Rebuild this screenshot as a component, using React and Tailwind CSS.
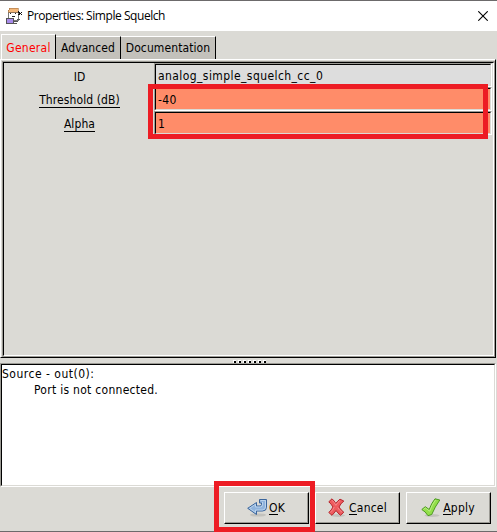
import React from "react";

const sans = "font-['DejaVu_Sans_Condensed','DejaVu_Sans',sans-serif] [font-stretch:condensed]";

function Entry({ value, fill }) {
  return (
    <div className="h-6 w-[338px] border-t border-l border-t-[#9b9a94] border-l-[#9b9a94] border-r border-b border-r-white border-b-white">
      <div className={`flex h-[22px] items-center border-t border-l border-black border-r border-b border-r-[#dbdad5] border-b-[#dbdad5] pt-[2px] pl-[2px] text-[12px] tracking-[0.42px] ${fill}`}>
        <span className="whitespace-pre">{value}</span>
      </div>
    </div>
  );
}

function Row({ label, underline, children }) {
  return (
    <div className="flex h-6">
      <div className="flex w-[151px] items-center justify-center pt-[3px] text-[12px] tracking-[0.1px]">
        <span className={underline ? "flex h-[14px] items-center border-b border-black" : "flex h-[14px] items-center"}>{label}</span>
      </div>
      <div className="-ml-px">{children}</div>
    </div>
  );
}

function Button({ icon, mnemonic, rest }) {
  return (
    <div className="h-8 w-[85px] border-t border-l border-white border-r border-b border-r-black border-b-black">
      <div className="flex h-[30px] items-center justify-center gap-[2px] border-r border-b border-[#9b9a94] text-[12px] tracking-[0.2px]">
        {icon}
        <span className="pt-[2px] leading-[15px]">
          <span className="inline-block border-b border-black leading-[12px]">{mnemonic}</span>
          {rest}
        </span>
      </div>
    </div>
  );
}

const OkIcon = (
  <svg className="h-5 w-5" viewBox="0 0 20 20">
    <ellipse cx="11" cy="17" rx="8" ry="1.6" fill="#c3c2bd" />
    <path d="M12.500 1.500h7v7.700q0 3.800-4 3.800H9.500v3.500L.7 10.300 9.500 4.500v3.500h3.500q1.500 0 1.500-1.500V5h-2z" fill="#8fb3dc" stroke="#3a659c" strokeLinejoin="round" />
    <path d="M13.500 2.500h5v6.500q0 3-3.300 3H8.500v2.500L2.500 10.300 8.500 6.300V9h5q2 0 2-2.500V4" fill="none" stroke="#c5daf0" strokeWidth=".8" />
  </svg>
);

const CancelIcon = (
  <svg className="h-5 w-5" viewBox="0 0 20 20">
    <ellipse cx="11" cy="17.500" rx="7" ry="1.400" fill="#c3c2bd" />
    <path d="M5 .8Q7.500 3 8.800 5.500 10.500 3 13 1.200L16.800 3Q13.500 5.800 12 9q2 3.200 4.800 5.200L13.500 17.300Q10.700 15 9 12.500 7.300 15 5 17.300L1.800 14.500Q4.500 12 6 9 4.200 6 1.800 3.800z" fill="#ee5b5e" stroke="#b5242b" strokeLinejoin="round" />
    <path d="M5 2.200Q7.500 4.500 8.800 7.300 10.500 4.500 13 2.500M3.300 14.500Q6 12 7.200 9M10.700 9.500q1.800 3 4.500 4.800" fill="none" stroke="#f79799" strokeWidth=".8" />
  </svg>
);

const ApplyIcon = (
  <svg className="h-5 w-5" viewBox="0 0 20 20">
    <ellipse cx="11" cy="17.500" rx="7.500" ry="1.400" fill="#c3c2bd" />
    <path d="M.8 11.500 4.300 8.700 8.200 11.500Q10.500 5 14 .8L18.800 2Q13.800 9 10.700 16.500L7 17.700Q4.500 13.500.8 11.500z" fill="#92df49" stroke="#4d9a22" strokeLinejoin="round" />
    <path d="M2.500 11.400 4.400 10 8.700 13.200Q11 6.500 14.500 2" fill="none" stroke="#c5f195" strokeWidth=".8" />
  </svg>
);

function AppIcon() {
  return (
    <svg className="h-4 w-4" viewBox="0 0 16 16" shapeRendering="crispEdges">
      <path d="M2 4h10v8H2z" fill="#fff" stroke="#777" />
      <path d="M3 0h9v4H2V2h1z" fill="#f4b778" stroke="#a67545" strokeWidth=".6" />
      <path d="M4 5h1v1H4zM9 5h1v1H9zM6 8h3v1H6z" fill="#222" />
      <path d="M0 10h8v6H0z" fill="#555" />
      <path d="M1 11h6v4H1z" fill="#a78bea" />
      <path d="M7 13h5v1H7zM11 11h3v1h-3zM8 15h3v1H8z" fill="#555" />
      <path d="M12 3h1v1h1v1h1V4h1v1h-1v1h1v1h-1V6h-1v1h-2V6h1V5h-1z" fill="#111" />
    </svg>
  );
}

export default function App() {
  return (
    <div className={`relative flex h-[532px] w-[497px] flex-col overflow-hidden bg-[#dbdad5] text-black ${sans}`}>
      <header className="flex h-[31px] shrink-0 items-center border-t border-[#6c6a6b] bg-white pl-[6px]">
        <AppIcon />
        <h1 className="ml-[5px] font-['Open_Sans','Noto_Sans',sans-serif] text-[12px] tracking-[-0.44px] [font-stretch:normal]">Properties: Simple Squelch</h1>
        <svg className="mr-[9px] ml-auto h-[10px] w-[10px]" viewBox="0 0 10 10">
          <path d="M.3.3l9.400 9.400M9.700.3.3 9.700" stroke="#000" strokeWidth="1.100" />
        </svg>
      </header>

      <nav className="flex h-[28px] shrink-0 items-end pl-px text-[12px] tracking-[0.1px]">
        <div className="flex h-[25px] w-[55px] items-center justify-center border-t border-l border-r border-white border-r-black pt-px tracking-[0.25px] text-[#ff0000]">General</div>
        <div className="flex h-[23px] w-[65px] items-center justify-center border-t border-r border-t-white border-r-black bg-[#c3c1bb]">Advanced</div>
        <div className="flex h-[23px] w-[95px] items-center justify-center border-t border-r border-t-white border-r-black bg-[#c3c1bb]">Documentation</div>
      </nav>

      <section className="flex h-[299px] w-[496px] shrink-0 flex-col border border-t-white border-l-white border-r-black border-b-black pt-px pl-px">
        <div className="flex min-h-0 flex-1 border border-[#9b9a94]">
          <div className="flex-1 border border-t-black border-l-black border-r-white border-b-white">
            <Row label="ID"><Entry value="analog_simple_squelch_cc_0" fill="bg-[#dddddd]" /></Row>
            <Row label="Threshold (dB)" underline><Entry value="-40" fill="bg-[#ff8c69]" /></Row>
            <Row label="Alpha" underline><Entry value="1" fill="bg-[#ff8c69]" /></Row>
          </div>
        </div>
      </section>

      <div className="flex h-[5px] shrink-0 items-center justify-center gap-[2px] pt-px pl-[2px]">
        {[0, 1, 2, 3, 4, 5, 6].map((dot) => (
          <i key={dot} className="h-[3px] w-[3px] border-t border-l border-white bg-black" />
        ))}
      </div>

      <section className="h-[124px] w-[496px] shrink-0 border border-t-[#9b9a94] border-l-[#9b9a94] border-r-white border-b-white">
        <div className="h-full border border-t-black border-l-black border-r-[#dbdad5] border-b-[#dbdad5] bg-white pt-px text-[12px] leading-4">
          <p className="tracking-[0.5px]">Source - out(0):</p>
          <p className="pl-8 tracking-[0.28px]">Port is not connected.</p>
        </div>
      </section>

      <footer className="flex flex-1 items-start border-b border-[#6c6a6b] pt-[5px] pl-[224px]">
        <Button icon={OkIcon} mnemonic="O" rest="K" />
        <div className="ml-[6px]"><Button icon={CancelIcon} mnemonic="C" rest="ancel" /></div>
        <div className="ml-[6px]"><Button icon={ApplyIcon} mnemonic="A" rest="pply" /></div>
      </footer>

      <div className="absolute top-[84px] left-[148px] h-[55px] w-[340px] border-[5px] border-[#ed1c24]" />
      <div className="absolute top-[481px] left-[214px] h-[51px] w-[101px] border-[5px] border-[#ed1c24]" />
    </div>
  );
}
